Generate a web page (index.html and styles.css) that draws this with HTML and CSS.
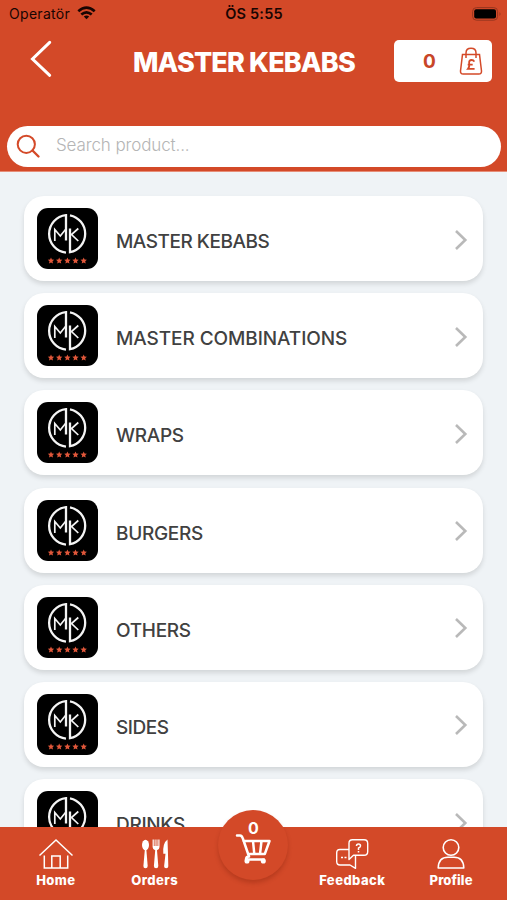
FILE: index.html
```html
<!DOCTYPE html>
<html lang="en">
<head>
<meta charset="utf-8">
<title>Master Kebabs</title>
<link rel="stylesheet" href="styles.css">
</head>
<body>
<svg class="defs" aria-hidden="true">
  <symbol id="logo" viewBox="0 0 61 61">
    <rect width="61" height="61" rx="11" fill="#000"/>
    <g fill="none" stroke="#f4f4f4">
      <path d="M29 32.500V7.200A18.800 18.800 0 0 0 29 44.600M33 20.500V44.200A18.800 18.800 0 0 0 33 7.300" stroke-width="2.300"/>
      <path d="M17.800 33V21.500L23.300 28 28.500 21.500M41.300 20.500L34.500 26.500 41.300 33" stroke-width="1.700"/>
    </g>
    <g fill="#e1573a">
      <path id="star" d="M14 49.500l.9 2.100 2.300.2-1.700 1.500.5 2.300-2-1.200-2 1.200.5-2.300-1.700-1.500 2.300-.2z"/>
      <use href="#star" x="8.200"/><use href="#star" x="16.400"/><use href="#star" x="24.500"/><use href="#star" x="32.700"/>
    </g>
  </symbol>
  <symbol id="chevron" viewBox="0 0 14 22"><path d="M2 2l9.300 9L2 20" fill="none" stroke="#b9b9b9" stroke-width="2.600"/></symbol>
</svg>
<div class="app">
  <header class="header">
    <div class="status">
      <div class="carrier"><span>Operatör</span>
        <svg width="19" height="14" viewBox="0 0 19 14" fill="none" stroke="#180502" stroke-width="2.700"><path d="M1.300 5.300Q9.500-1.900 17.700 5.300M4.300 8.500Q9.500 4.100 14.700 8.500"/><path d="M6.800 10.500Q9.500 8.500 12.200 10.500L9.500 13.200z" fill="#180502" stroke="none"/></svg>
      </div>
      <div class="clock">ÖS 5:55</div>
      <svg class="battery" width="30" height="14" viewBox="0 0 30 14"><rect x=".6" y=".6" width="25" height="12.600" rx="3.800" fill="none" stroke="#97361f"/><rect x="2.200" y="2.300" width="21.800" height="9.200" rx="2" fill="#000"/><path d="M27.500 5q2 2 0 4z" fill="#97361f"/></svg>
    </div>
    <div class="titlebar">
      <svg class="back" width="22" height="38" viewBox="0 0 22 38"><path d="M19.700 2.300L2.500 19 19.700 35.300" fill="none" stroke="#fff" stroke-width="3" stroke-linecap="round"/></svg>
      <h1>MASTER KEBABS</h1>
      <div class="basket"><span>0</span>
        <svg width="24" height="29" viewBox="0 0 24 29" fill="none" stroke="#d44a29" stroke-width="1.500"><path d="M3.500 7.500h17L22.500 24q.2 3-2.700 3H4.200q-2.900 0-2.700-3z"/><path d="M7 11V6q0-4.700 5-4.700T17 6v5"/><path d="M15.300 14.700q-.8-1.700-2.600-1.700-3.100 0-2.500 3.500.6 3.200-1.200 5.300h6.600M8.700 17.600h5" stroke-width="1.800"/></svg>
      </div>
    </div>
    <div class="search">
      <svg width="25" height="25" viewBox="0 0 25 25" fill="none" stroke="#d44a29" stroke-width="2"><circle cx="10.300" cy="10.300" r="8.600"/><path d="M16.500 16.500l6 6" stroke-width="2.400" stroke-linecap="round"/></svg>
      <span>Search product...</span>
    </div>
  </header>
  <main class="list">
    <div class="card"><svg class="logo"><use href="#logo"/></svg><span class="name tight">MASTER KEBABS</span><svg class="chev"><use href="#chevron"/></svg></div>
    <div class="card"><svg class="logo"><use href="#logo"/></svg><span class="name wide">MASTER COMBINATIONS</span><svg class="chev"><use href="#chevron"/></svg></div>
    <div class="card"><svg class="logo"><use href="#logo"/></svg><span class="name">WRAPS</span><svg class="chev"><use href="#chevron"/></svg></div>
    <div class="card"><svg class="logo"><use href="#logo"/></svg><span class="name">BURGERS</span><svg class="chev"><use href="#chevron"/></svg></div>
    <div class="card"><svg class="logo"><use href="#logo"/></svg><span class="name">OTHERS</span><svg class="chev"><use href="#chevron"/></svg></div>
    <div class="card"><svg class="logo"><use href="#logo"/></svg><span class="name tight">SIDES</span><svg class="chev"><use href="#chevron"/></svg></div>
    <div class="card"><svg class="logo"><use href="#logo"/></svg><span class="name">DRINKS</span><svg class="chev"><use href="#chevron"/></svg></div>
  </main>
  <nav class="tabs">
    <div class="tab"><svg width="36" height="32" viewBox="0 0 36 32" fill="none" stroke="#fff" stroke-width="1.500"><path d="M1.500 17.500L18 2l16.500 15.500M6.300 17.500V30h7.500V18h8.400v12h7.500V17.500M13.800 30h8.400"/></svg><span>Home</span></div>
    <div class="tab"><svg width="30" height="32" viewBox="0 0 30 32" fill="#fff"><ellipse cx="5.500" cy="7" rx="3.500" ry="5.300"/><path d="M4.900 11h1.400l1.400 17q0 2.300-2.200 2.300T3.400 28z"/><path d="M12.600 1.500h1.200V8h.8V1.500h1V8h.9V1.500h1V8h.8V1.500h1.200V9q0 2.500-2.500 3.300L18.300 28q0 2.300-2.200 2.300T13.900 28l1.300-15.700Q12.600 11.500 12.600 9zM27.500 1.500q.5 13 .8 26.800 0 2-2.100 2t-2.100-2l1.400-12.500h-2.200Q22.500 5 27.500 1.500z"/></svg><span>Orders</span></div>
    <div class="tab cart"><div class="bubble"><span>0</span><svg width="37" height="32" viewBox="0 0 37 32" fill="none" stroke="#fff" stroke-width="2.500" stroke-linecap="round" stroke-linejoin="round"><path d="M2 2.500h3q2 0 3 3.500l6 17.500M8.500 8H34.500l-4.700 13H13M18 8l1.300 13M26.500 8l-1.500 13M14 23.500q-3 0-3 3h18"/><circle cx="12" cy="28" r="1.300"/><circle cx="28.300" cy="28" r="1.300"/></svg></div></div>
    <div class="tab"><svg width="34" height="32" viewBox="0 0 34 32" fill="none" stroke="#fff" stroke-width="1.400" stroke-linejoin="round"><path d="M17.500 1.700H29q3.700 0 3.700 3.700v8.400q0 3.500-3.700 3.500H18.500L14 21.500V5.200q0-3.500 3.500-3.500zM14 11.500H5q-3.300 0-3.300 3.500v8.500Q1.700 27 5 27h10l5.500 3.300v-13"/><path d="M6 19.500h2M9.500 19.500h2M21.500 8q0-2 2-2t2 2q0 1.200-2 2v2M23.500 13v1.500" stroke-width="1.500"/></svg><span>Feedback</span></div>
    <div class="tab"><svg width="30" height="32" viewBox="0 0 30 32" fill="none" stroke="#fff" stroke-width="1.600"><circle cx="15" cy="9.500" r="7.800"/><path d="M2.200 30Q2.500 19.300 12 19.300h6q9.500 0 9.800 10.700z" stroke-linejoin="round"/></svg><span class="profile">Profile</span></div>
  </nav>
</div>
</body>
</html>
```
FILE: styles.css
```css
* { box-sizing: border-box; }
body { margin: 0; font-family: Inter, "Liberation Sans", sans-serif; background: #eff3f6; }
.defs { position: absolute; width: 0; height: 0; }
.app { width: 507px; height: 900px; display: flex; flex-direction: column; overflow: hidden; }
.header { height: 172px; flex: none; background: #d34928; border-bottom: 1px solid #e68d77; }
.status { height: 28px; display: grid; grid-template-columns: 1fr 80px 1fr; align-items: center; padding: 0 6px 0 9px; color: #180502; font-size: 14px; }
.status > * { margin-top: -1px; }
.carrier { display: flex; align-items: center; gap: 7px; letter-spacing: .3px; }
.carrier svg { margin-top: -1px; }
.clock { font-weight: 600; font-size: 14.5px; letter-spacing: .2px; text-align: center; white-space: nowrap; position: relative; left: -1px; }
.battery { justify-self: end; margin-right: -1px; }
.titlebar { height: 66px; display: flex; align-items: center; padding: 0 15px 0 30px; }
.back { margin-top: -4px; }
h1 { margin: 3px 0 0 81px; width: 222px; font-size: 27px; line-height: 34px; font-weight: 800; color: #fff; white-space: nowrap; letter-spacing: -.85px; }
.basket { margin-left: auto; width: 98px; height: 42px; border-radius: 5px; background: #fff; display: flex; align-items: center; justify-content: space-between; padding: 0 9px 0 29px; color: #c84628; font-size: 19px; font-weight: 700; }
.basket span { margin-top: 1px; }
.search { margin: 32px 6px 0 7px; height: 41px; border-radius: 21px; background: #fff; display: flex; align-items: center; gap: 15px; padding-left: 9px; font-size: 17px; font-weight: 300; letter-spacing: -.12px; color: #b5b5b5; }
.search span { margin-top: -4px; }
.list { height: 655px; flex: none; overflow: hidden; padding: 24px 24px 0; display: flex; flex-direction: column; gap: 12.2px; }
.card { height: 85px; flex: none; background: #fff; border-radius: 20px; box-shadow: 0 3px 5px rgba(0,0,0,.12); display: flex; align-items: center; padding: 0 15px 0 13px; }
.logo { width: 61px; height: 61px; }
.name { margin: 6px 0 0 18px; font-size: 19px; font-weight: 500; color: #414141; white-space: nowrap; letter-spacing: -.3px; }
.tight { letter-spacing: -.48px; }
.wide { letter-spacing: -.08px; }
.chev { width: 14px; height: 22px; margin-left: auto; margin-top: 2px; }
.tabs { height: 73px; flex: none; background: #d34928; display: grid; grid-template-columns: repeat(5, 98.8px); padding-left: 6.5px; color: #fff; }
.tab { display: flex; flex-direction: column; align-items: center; padding-top: 11px; font-size: 13px; line-height: 16px; font-weight: 800; letter-spacing: .45px; }
.tab > span { margin-top: 2px; }
.tab .profile { letter-spacing: .1px; }
.cart { padding: 0; }
.bubble { position: relative; top: -17px; width: 70px; height: 70px; flex: none; border-radius: 50%; background: #d34928; box-shadow: 0 3px 4px rgba(100,20,5,.25); display: flex; flex-direction: column; align-items: center; padding-top: 10px; font-size: 16px; font-weight: 700; letter-spacing: 0; clip-path: inset(0 -10px -10px -10px); }
.bubble svg { margin-top: -3px; }
```
